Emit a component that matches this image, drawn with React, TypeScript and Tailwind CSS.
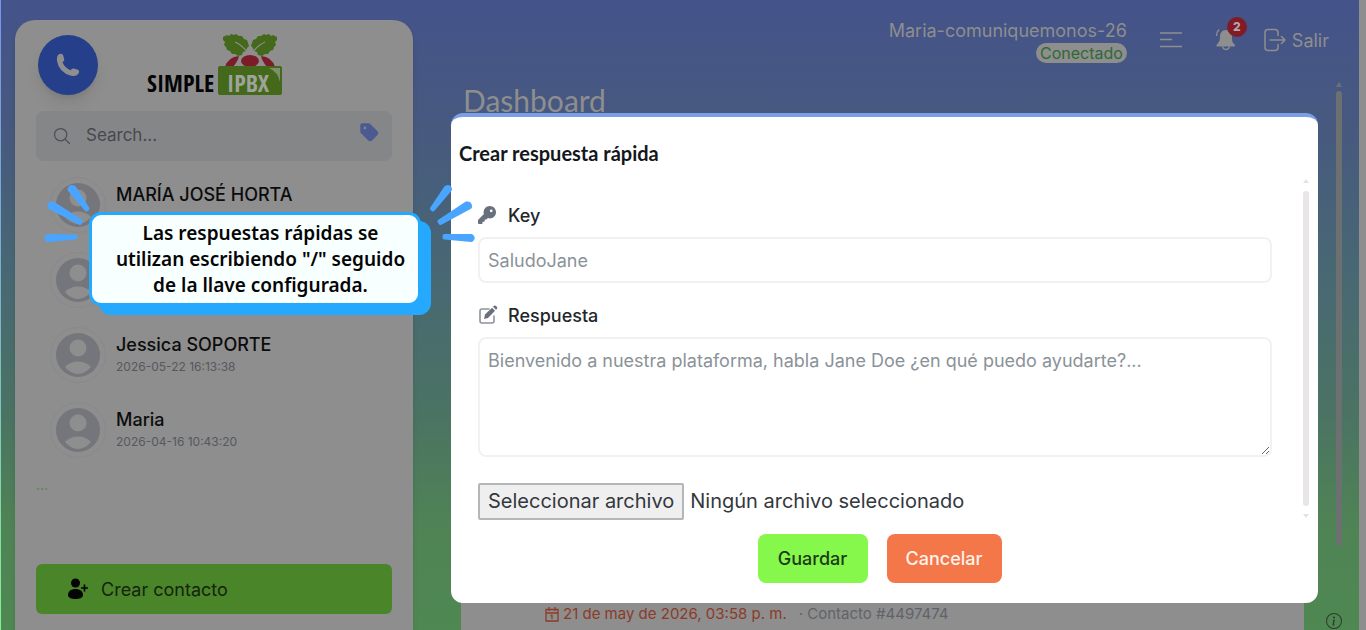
import { useState } from 'react';
import { IoSearchOutline } from 'react-icons/io5';
import { FaKey, FaTag } from 'react-icons/fa6';
import { BsInfoCircle } from 'react-icons/bs';

interface Contact {
  id: number;
  name?: string;
  lastSeen?: string;
}

const contacts: Contact[] = [
  { id: 1, name: 'MARÍA JOSÉ HORTA' },
  { id: 2 },
  { id: 3, name: 'Jessica SOPORTE', lastSeen: '2026-05-22 16:13:38' },
  { id: 4, name: 'Maria', lastSeen: '2026-04-16 10:43:20' },
];

function Logo() {
  return (
    <svg width="140" height="76" viewBox="0 0 140 76" role="img" aria-label="Simple IPBX">
      {/* Leaves */}
      <path
        d="M76 4L80 2L82 3L84 1L87 2L89 1L92 3L95 3L97 6L100 7L101 10L102 13L100 15L99 18L96 19L95 22L91 23L88 21L85 21L83 18L80 17L79 14L77 12L78 9L76 7z"
        fill="#44691b"
      />
      <path
        d="M130 4L126 2L124 3L122 1L119 2L117 1L114 3L111 3L109 6L106 7L105 10L104 13L106 15L107 18L110 19L111 22L115 23L118 21L121 21L123 18L126 17L127 14L129 12L128 9L130 7z"
        fill="#44691b"
      />
      <path d="M88 9Q95 12 101 20M118 9Q111 12 105 20" stroke="#8e8e8e" strokeWidth="1.2" fill="none" />
      {/* Berries */}
      <ellipse cx="103" cy="28" rx="9" ry="6" fill="#7d1c29" />
      <path d="M78 34q3 -10 14 -11q-1 5 -6 11zM128 34q-3 -10 -14 -11q1 5 6 11z" fill="#7d1c29" />
      <rect x="71" y="33" width="64" height="29" rx="2" fill="#44691b" />
      <path d="M122 35h11v14q-2 -10 -11 -14z" fill="#7f8e6d" />
      <text
        x="0"
        y="59"
        fontSize="24"
        fontFamily="'Liberation Sans Narrow', 'Open Sans Condensed', 'DejaVu Sans Condensed', sans-serif"
        fill="#050505"
      >
        SIMPLE
      </text>
      <text
        x="80"
        y="59"
        fontSize="24"
        fontFamily="'Liberation Sans Narrow', 'Open Sans Condensed', 'DejaVu Sans Condensed', sans-serif"
        fill="#a0a39b"
      >
        IPBX
      </text>
    </svg>
  );
}

function PhoneIcon() {
  return (
    <svg width="24" height="24" viewBox="0 0 24 24" fill="currentColor" aria-hidden="true">
      <path d="M2 2Q5 -.5 7 2L8.200 6Q8.500 8 6.500 9.200Q8.500 14.500 14.500 17.200Q16 15 18 15.500L22 16.800Q24 18 22.500 20.500Q20.500 24 15 22.800Q3 19.500 1 8Q.5 4 2 2z" />
    </svg>
  );
}

function Avatar() {
  return (
    <span className="grid size-14 shrink-0 place-items-center rounded-full border border-[#898989]">
      <svg width="44" height="44" viewBox="0 0 44 44" aria-hidden="true">
        <circle cx="22" cy="22" r="22" fill="#74767c" />
        <circle cx="22" cy="15" r="8.5" fill="#8e8e8e" />
        <path d="M9 34Q14 28.5 22 28.5T35 34Q29 41 22 41T9 34z" fill="#8e8e8e" />
      </svg>
    </span>
  );
}

function EditIcon() {
  return (
    <svg width="20" height="20" viewBox="0 0 20 20" className="text-[#69707d]" aria-hidden="true">
      <path
        d="M11 4H4Q2 4 2 6V16Q2 18 4 18H14Q16 18 16 16V11"
        fill="none"
        stroke="#8d929b"
        strokeWidth="1.6"
        strokeLinecap="round"
      />
      <path d="M6 14l1-4.500L14 2.800l3 3L10 13z" fill="currentColor" />
      <path d="M15 1.800l1-1q1-.8 2 .2l.8.800q1 1 .2 2l-1 1z" fill="currentColor" />
    </svg>
  );
}

function Sidebar() {
  return (
    <aside className="flex w-[398px] shrink-0 flex-col rounded-t-[20px] bg-[#8e8e8e] px-[21px] pt-[13px] pb-4 shadow-md">
      <div className="flex h-[78px] items-start">
        <button
          type="button"
          aria-label="Llamar"
          className="mt-0.5 ml-0.5 grid size-15 place-items-center rounded-full bg-[#263f8b] text-[#8e8e8e] shadow-lg"
        >
          <PhoneIcon />
        </button>
        <div className="ml-[49px]">
          <Logo />
        </div>
      </div>

      <div className="flex h-[50px] items-center rounded-lg bg-[#858688] pr-3 pl-4">
        <IoSearchOutline size={20} className="text-[#4b4f56]" />
        <input
          type="search"
          aria-label="Search"
          placeholder="Search..."
          className="ml-[14px] min-w-0 flex-1 bg-transparent text-[17px] outline-none placeholder:text-[#45494f]"
        />
        <button type="button" aria-label="Etiquetas" className="mb-2 text-[#4c5a92]">
          <FaTag size={21} />
        </button>
      </div>

      <ul className="mt-[6px]">
        {contacts.map((contact) => (
          <li key={contact.id} className="flex h-[75px] items-center pl-[14px]">
            <Avatar />
            <div className="ml-[10px] pt-px">
              <p className="h-6 text-[18px] leading-6 font-medium text-[#0c0c0c]">{contact.name}</p>
              <p className="h-5 text-[12px] leading-5 text-[#55585e]">{contact.lastSeen}</p>
            </div>
          </li>
        ))}
      </ul>

      <p className="mt-2 text-[14px] leading-5 text-[#4c8852]">...</p>

      <button
        type="button"
        className="mt-auto flex h-[50px] items-center rounded-md bg-[#4a852a] pl-[31px] text-[18px] text-[#14240c]"
      >
        <svg width="22" height="22" viewBox="0 0 22 22" fill="#050505" aria-hidden="true">
          <circle cx="8.500" cy="5" r="4.500" />
          <path d="M1 17c0-4 3.500-6 7.500-6s7.500 2 7.500 6c0 3-4 4-7.500 4S1 20 1 17z" />
          <path d="M17.500 6.500v7M14 10h7" stroke="#050505" strokeWidth="1.700" />
        </svg>
        <span className="ml-3">Crear contacto</span>
      </button>
    </aside>
  );
}

function Topbar() {
  return (
    <header className="flex h-20 items-center justify-end pr-[30px] text-[#8e8e8e]">
      <div className="mt-0.5 flex flex-col items-end">
        <span className="text-[18px] leading-6">Maria-comuniquemonos-26</span>
        <span className="rounded-full bg-[#8e8e8e] px-1 text-[16px] leading-5 text-[#2f6a35]">Conectado</span>
      </div>
      <button type="button" aria-label="Menú" className="ml-[33px]">
        <svg width="22" height="18" viewBox="0 0 22 18" stroke="currentColor" strokeWidth="1.500" aria-hidden="true">
          <path d="M0 2h22M0 8.500h12M0 15.500h22" />
        </svg>
      </button>
      <button type="button" aria-label="Notificaciones" className="relative ml-[33px]">
        <svg width="24" height="24" viewBox="0 0 24 24" fill="currentColor" aria-hidden="true">
          <path d="M11 2c-4 0-6 3-6 6.500C5 13 4 14 1.500 17q-.5 1.500 1 1.500h16.500q1.500 0 1-1.500C17 14 17 13 17 8.500 17 5 15 2 11 2z" />
          <path d="M7.500 18.500q.5 3 3.500 3t3.500-3M1.500 8Q1.500 4 4 1.500" fill="none" stroke="currentColor" strokeWidth="1.400" />
        </svg>
        <span className="absolute -top-[11px] -right-2 grid size-5 place-items-center rounded-full bg-[#821b25] text-[12px] font-extrabold text-[#b5a5a7]">
          2
        </span>
      </button>
      <button type="button" className="ml-[25px] flex items-center gap-[6px] text-[18px]">
        <svg
          width="22"
          height="24"
          viewBox="0 0 22 24"
          fill="none"
          stroke="currentColor"
          strokeWidth="1.500"
          strokeLinecap="round"
          strokeLinejoin="round"
          aria-hidden="true"
        >
          <path d="M14 7.500V4.500Q14 1.500 11 1.500H4Q1 1.500 1 4.500V19.500Q1 22.500 4 22.500H11Q14 22.500 14 19.500V16.500M6 12H21M17.500 8.500L21 12L17.500 15.500" />
        </svg>
        Salir
      </button>
    </header>
  );
}

function Dashboard() {
  return (
    <main className="flex min-w-0 flex-1 flex-col">
      <Topbar />
      <div className="flex flex-1">
        <section className="ml-12 flex min-w-0 flex-1 flex-col">
          <h1 className="ml-[2px] font-['Lato',sans-serif] text-[30px] leading-10 text-[#8e8e8e]">Dashboard</h1>
          <article className="mt-2 flex flex-1 items-end bg-[#8e8e8e] pb-1 pl-[84px]">
            <p className="flex items-center text-[15px] leading-6 text-[#8b3b28]">
              <svg width="14" height="15" viewBox="0 0 14 15" fill="none" stroke="currentColor" strokeWidth="1.300" aria-hidden="true">
                <path d="M1 2.500h12v11.500H1zM1 6h12M4 0v4M10 0v4M5.500 8.500h1.500v3.500" />
              </svg>
              <span className="ml-1">21 de may de 2026, 03:58 p. m.</span>
              <span className="ml-3 text-[#606369]">· Contacto #4497474</span>
            </p>
          </article>
        </section>
        <div className="flex w-[55px] flex-col items-end">
          <div className="mr-[17px] flex flex-1 flex-col items-center text-[#6c7070]">
            <svg width="6" height="5" viewBox="0 0 6 5" fill="currentColor" className="mt-0.5" aria-hidden="true">
              <path d="M3 0L6 5H0z" />
            </svg>
            <div className="mt-1 mb-[19px] w-1.5 flex-1 rounded-full bg-[#6c7070]" />
          </div>
          <button type="button" aria-label="Información" className="mt-12 mr-[17px] mb-px text-[#2c3a2d]">
            <BsInfoCircle size={16} />
          </button>
        </div>
      </div>
    </main>
  );
}

function QuickReplyDialog() {
  const [key, setKey] = useState('');
  const [reply, setReply] = useState('');
  const [fileName, setFileName] = useState('');

  return (
    <div
      role="dialog"
      aria-labelledby="dialog-title"
      className="flex w-full flex-col rounded-xl border-t-4 border-[#7b9fe4] bg-white pb-5"
    >
      <h2 id="dialog-title" className="mt-[22px] ml-2 font-['Lato',sans-serif] text-[20px] leading-7 font-bold text-[#14171b]">
        Crear respuesta rápida
      </h2>

      <form onSubmit={(e) => e.preventDefault()}>
        <div className="mt-[10px] flex">
          <div className="flex min-w-0 flex-1 flex-col pl-[27px]">
            <label htmlFor="key" className="mt-6 flex h-7 items-center gap-[10px] text-[18px] font-medium text-[#22262b]">
              <span className="w-5">
                <FaKey size={18} className="text-[#69707d]" />
              </span>
              Key
            </label>
            <input
              id="key"
              value={key}
              onChange={(e) => setKey(e.target.value)}
              placeholder="SaludoJane"
              className="mt-2 h-[46px] rounded-lg border-2 border-[#f1f1f2] px-2 text-[18px] outline-none placeholder:text-[#8b9298]"
            />
            <label htmlFor="reply" className="mt-[18px] flex h-7 items-center gap-[10px] text-[18px] font-medium text-[#22262b]">
              <EditIcon />
              Respuesta
            </label>
            <textarea
              id="reply"
              value={reply}
              onChange={(e) => setReply(e.target.value)}
              placeholder="Bienvenido a nuestra plataforma, habla Jane Doe ¿en qué puedo ayudarte?..."
              className="mt-2 h-[120px] resize-y rounded-lg border-2 border-[#f1f1f2] px-2 py-2 text-[18px] leading-7 outline-none placeholder:text-[#8b9298]"
            />
            <label htmlFor="file" className="mt-[26px] flex items-center gap-[6px] text-[20px] leading-[29px] text-[#33383d]">
              <span className="rounded-xs border-2 border-[#b5b6b8] bg-[#efefef] px-2 py-[2px]">
                Seleccionar archivo
              </span>
              {fileName || 'Ningún archivo seleccionado'}
              <input
                id="file"
                type="file"
                className="hidden"
                onChange={(e) => setFileName(e.target.files?.[0]?.name ?? '')}
              />
            </label>
          </div>

          {/* Scroll track */}
          <div className="mr-[9px] ml-[31px] flex flex-col items-center py-0.5 text-[#e4e2e3]">
            <svg width="6" height="4" viewBox="0 0 6 4" fill="currentColor" aria-hidden="true">
              <path d="M3 0L6 4H0z" />
            </svg>
            <div className="my-2 w-1.5 flex-1 rounded-full bg-[#e8e6e7]" />
            <svg width="6" height="4" viewBox="0 0 6 4" fill="currentColor" aria-hidden="true">
              <path d="M3 4L0 0H6z" />
            </svg>
          </div>
        </div>

        <div className="mt-[14px] flex justify-center gap-[19px] pr-[10px]">
          <button type="submit" className="h-[49px] w-[110px] rounded-lg bg-[#86f74b] text-[18px] font-medium text-[#1c3a16]">
            Guardar
          </button>
          <button type="button" className="h-[49px] w-[115px] rounded-lg bg-[#f37748] text-[18px] font-medium text-[#fff3ed]">
            Cancelar
          </button>
        </div>
      </form>
    </div>
  );
}

function Callout() {
  return (
    <div role="note" className="absolute top-[212px] left-[89px]">
      <p className="w-[332px] rounded-xl border-[3px] border-[#24a9ff] bg-[#f8ffff] py-[5px] pl-[11px] text-center font-['Noto_Sans',sans-serif] text-[19px] leading-[26px] font-semibold text-[#050505] shadow-[10px_9px_0_#24a9ff]">
        Las respuestas rápidas se
        <br />
        utilizan escribiendo "/" seguido
        <br />
        de la llave configurada.
      </p>
      <svg
        width="440"
        height="70"
        viewBox="0 0 440 70"
        className="absolute -top-8 -left-[49px] max-w-none"
        fill="#49a5ff"
        stroke="#49a5ff"
        strokeWidth="4"
        strokeLinejoin="round"
        aria-hidden="true"
      >
        <path d="M29.500 9.500Q30 6 34 7.500L47.500 28.500L46.500 29.500z" />
        <path d="M9.500 27Q9 23 13 23.500L41 41.500L40 43z" />
        <path d="M7.500 56Q5.500 58 7.500 60L35.500 57.500L35.500 56.500z" />
        <path d="M406 7.500Q410 6 410 9.500L393 29.500L392 28.500z" />
        <path d="M426.500 23.500Q430.500 23 430 27L400.500 43L399.500 41.500z" />
        <path d="M431.500 56Q434 58 431.500 60L404.500 57.500L404.500 56z" />
      </svg>
    </div>
  );
}

export default function App() {
  return (
    <div className="relative font-['Inter',sans-serif]">
      <div className="flex min-h-screen border-r-[7px] border-[#8e8e8e] bg-linear-[180deg,#44538a_0%,#47597f_20%,#486873_44%,#4b7363_66%,#4f8355_83%,#4f8852_100%]">
        <div className="w-px bg-linear-to-b from-[#7b93e8] via-[#7bb4c8] to-[#86f090]" />
        <div className="flex min-w-0 flex-1 pl-[14px]">
          <div className="flex pt-5">
            <Sidebar />
          </div>
          <Dashboard />
        </div>
      </div>
      <div className="absolute inset-0 flex items-start pt-[113px] pr-12 pl-[451px]">
        <QuickReplyDialog />
      </div>
      <Callout />
    </div>
  );
}
